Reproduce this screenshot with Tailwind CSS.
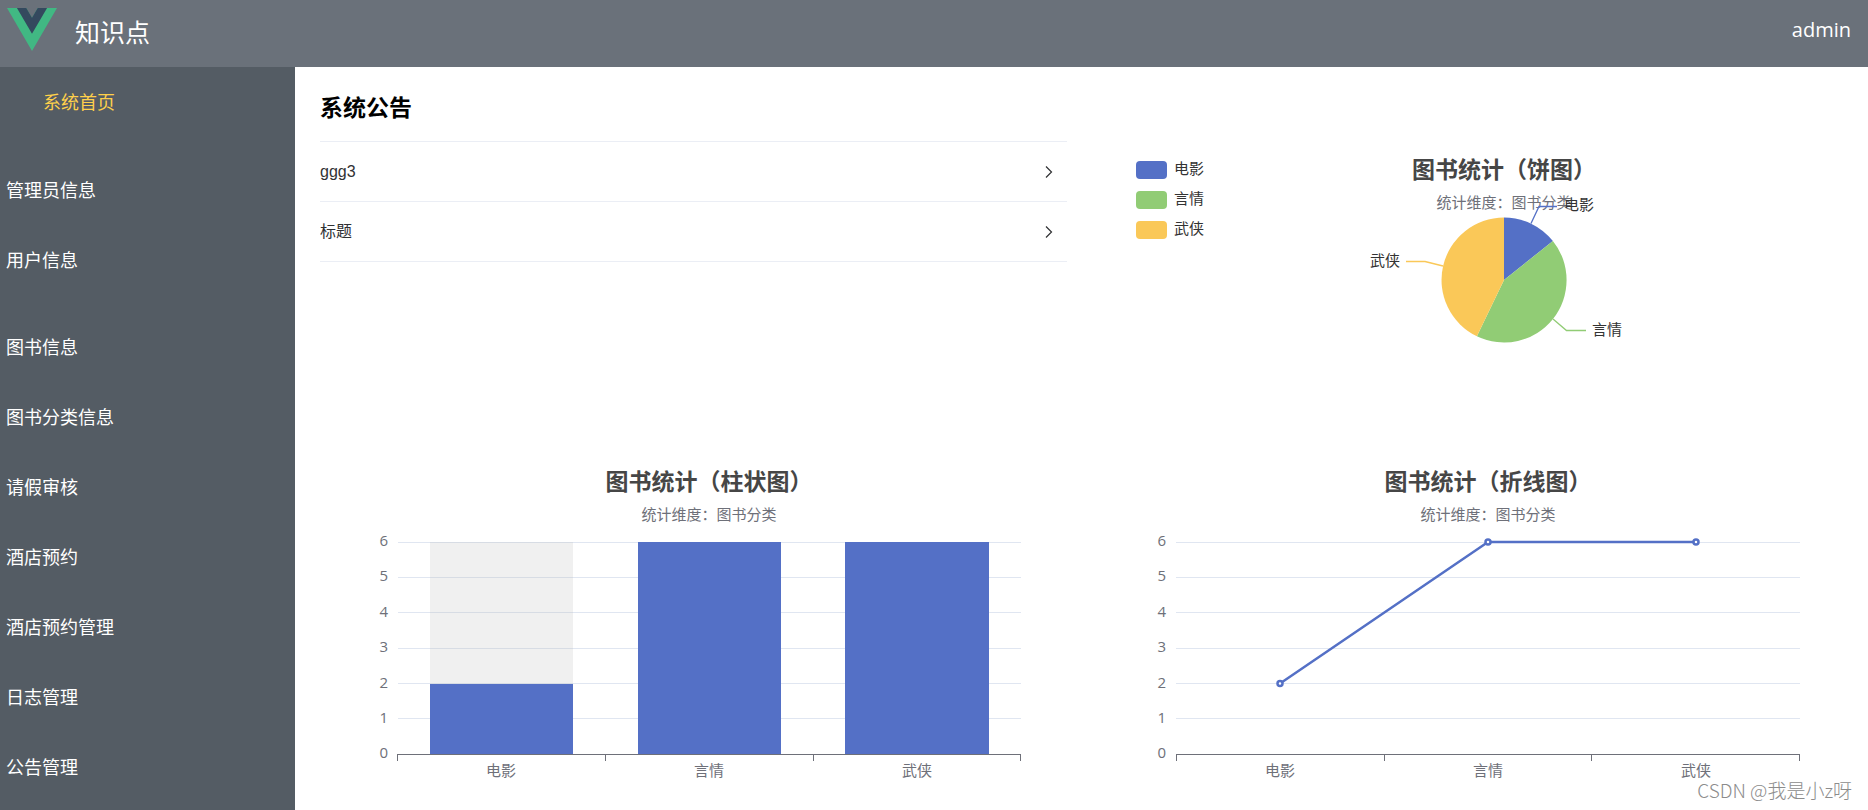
<!DOCTYPE html>
<html lang="zh-CN">
<head>
<meta charset="utf-8">
<meta name="viewport" content="width=device-width, initial-scale=1">
<title>知识点</title>
<script src="https://cdn.jsdelivr.net/npm/@tailwindcss/browser@4"></script>
</head>
<body class="min-h-screen flex flex-col bg-white overflow-x-hidden font-['Open_Sans','Noto_Sans_CJK_SC',sans-serif]">
<header class="h-[67px] shrink-0 bg-[#6a717a] flex items-center justify-between pl-[7px] pr-[17px] text-white">
  <div class="flex items-center gap-[18px] mb-2">
    <svg class="w-[50px] h-[43px]" viewBox="0 0 262 227" preserveAspectRatio="none" aria-hidden="true">
      <path fill="#41b883" d="M161 0l-30 52L101 0H0l131 227L262 0z"/>
      <path fill="#34495e" d="M161 0l-30 52L101 0H52l79 136L210 0z"/>
    </svg>
    <h1 class="text-[25px] leading-8 pt-1">知识点</h1>
  </div>
  <a href="#" class="text-xl mb-2">admin</a>
</header>
<div class="flex flex-1">
  <nav class="w-[295px] shrink-0 bg-[#545c64] text-white text-lg">
    <a href="#" class="flex items-center h-[70px] pl-[43px] text-[#ffd04b]">系统首页</a>
    <div class="mt-[18px]">
      <a href="#" class="flex items-center h-[70px] pl-[6px]">管理员信息</a>
      <a href="#" class="flex items-center h-[70px] pl-[6px]">用户信息</a>
    </div>
    <div class="mt-[17px]">
      <a href="#" class="flex items-center h-[70px] pl-[6px]">图书信息</a>
      <a href="#" class="flex items-center h-[70px] pl-[6px]">图书分类信息</a>
      <a href="#" class="flex items-center h-[70px] pl-[6px]">请假审核</a>
      <a href="#" class="flex items-center h-[70px] pl-[6px]">酒店预约</a>
      <a href="#" class="flex items-center h-[70px] pl-[6px]">酒店预约管理</a>
      <a href="#" class="flex items-center h-[70px] pl-[6px]">日志管理</a>
      <a href="#" class="flex items-center h-[70px] pl-[6px]">公告管理</a>
    </div>
  </nav>
  <main class="flex-1 min-w-0 pl-[25px]">
    <div class="grid grid-cols-2 -mr-[10px]">
      <section class="pr-8 pt-6">
        <h2 class="text-[23px] leading-8 font-bold text-black pb-[18px]">系统公告</h2>
        <div class="border-t border-[#ebeef5] text-base text-[#303133] font-['Liberation_Sans','Noto_Sans_CJK_SC',sans-serif]">
          <button type="button" class="w-full h-[60px] flex items-center justify-between pr-[14px] border-b border-[#ebeef5]">
            <span>ggg3</span>
            <svg class="w-2 h-3" viewBox="0 0 8 12" fill="none" stroke="#303133" stroke-width="1.200" aria-hidden="true"><path d="M1 0.5L6.5 6L1 11.5"/></svg>
          </button>
          <button type="button" class="w-full h-[60px] flex items-center justify-between pr-[14px] border-b border-[#ebeef5]">
            <span>标题</span>
            <svg class="w-2 h-3" viewBox="0 0 8 12" fill="none" stroke="#303133" stroke-width="1.200" aria-hidden="true"><path d="M1 0.5L6.5 6L1 11.5"/></svg>
          </button>
        </div>
      </section>

      <!-- Pie chart -->
      <svg class="w-full h-auto" viewBox="0 0 779 383" font-size="15" fill="#333" role="img" aria-label="图书统计（饼图）">
        <rect x="37" y="94" width="31" height="18" rx="4" fill="#5470c6"/>
        <rect x="37" y="124" width="31" height="18" rx="4" fill="#91cc75"/>
        <rect x="37" y="154" width="31" height="18" rx="4" fill="#fac858"/>
        <text x="75" y="107">电影</text>
        <text x="75" y="137">言情</text>
        <text x="75" y="167">武侠</text>
        <text x="405" y="111" font-size="23" font-weight="700" fill="#464646" text-anchor="middle">图书统计（饼图）</text>
        <text x="405" y="141" fill="#6e7079" text-anchor="middle">统计维度：图书分类</text>
        <path fill="#5470c6" d="M405 213V150.500A62.500 62.500 0 0 1 453.900 174z"/>
        <path fill="#91cc75" d="M405 213L453.900 174A62.500 62.500 0 0 1 377.900 269.300z"/>
        <path fill="#fac858" d="M405 213L377.900 269.300A62.500 62.500 0 0 1 405 150.500z"/>
        <g fill="none" stroke-width="1.300">
          <path stroke="#5470c6" d="M432 156.500L440 139.500H458"/>
          <path stroke="#91cc75" d="M454 252L467.500 263.500H487"/>
          <path stroke="#fac858" d="M344 199L326 194.500H307"/>
        </g>
        <text x="465" y="143">电影</text>
        <text x="493" y="268">言情</text>
        <text x="271" y="199">武侠</text>
      </svg>

      <!-- Bar chart -->
      <svg class="w-full h-auto" viewBox="0 0 779 358" font-size="15" fill="#6e7079" role="img" aria-label="图书统计（柱状图）">
        <text x="389" y="40" font-size="23" font-weight="700" fill="#464646" text-anchor="middle">图书统计（柱状图）</text>
        <text x="389" y="70" text-anchor="middle">统计维度：图书分类</text>
        <path stroke="#e0e6f1" shape-rendering="crispEdges" d="M78 92.500H701M78 127.500H701M78 162.500H701M78 198.500H701M78 233.500H701M78 268.500H701"/>
        <rect x="110" y="92" width="143" height="212" fill="#b4b4b4" fill-opacity=".2"/>
        <g fill="#5470c6">
          <rect x="110" y="234" width="143" height="70"/>
          <rect x="318" y="92" width="143" height="212"/>
          <rect x="525" y="92" width="144" height="212"/>
        </g>
        <path fill="none" stroke="#6e7079" shape-rendering="crispEdges" d="M77 304.500H701M77.500 304V310.500M285.500 304V310.500M493.500 304V310.500M700.500 304V310.500"/>
        <g text-anchor="end">
          <text x="68" y="96">6</text><text x="68" y="131">5</text><text x="68" y="167">4</text><text x="68" y="202">3</text>
          <text x="68" y="238">2</text><text x="68" y="273">1</text><text x="68" y="308">0</text>
        </g>
        <g text-anchor="middle">
          <text x="181" y="326">电影</text><text x="389" y="326">言情</text><text x="597" y="326">武侠</text>
        </g>
      </svg>

      <!-- Line chart -->
      <svg class="w-full h-auto" viewBox="0 0 779 358" font-size="15" fill="#6e7079" role="img" aria-label="图书统计（折线图）">
        <text x="389" y="40" font-size="23" font-weight="700" fill="#464646" text-anchor="middle">图书统计（折线图）</text>
        <text x="389" y="70" text-anchor="middle">统计维度：图书分类</text>
        <path stroke="#e0e6f1" shape-rendering="crispEdges" d="M77 92.500H701M77 127.500H701M77 162.500H701M77 198.500H701M77 233.500H701M77 268.500H701"/>
        <path fill="none" stroke="#6e7079" shape-rendering="crispEdges" d="M77 304.500H701M77.500 304V310.500M285.500 304V310.500M492.500 304V310.500M700.500 304V310.500"/>
        <path fill="none" stroke="#5470c6" stroke-width="2.500" stroke-linejoin="bevel" d="M181 233.500L389 92H597"/>
        <g fill="#fff" stroke="#5470c6" stroke-width="2.500">
          <circle cx="181" cy="233.500" r="2.500"/><circle cx="389" cy="92" r="2.500"/><circle cx="597" cy="92" r="2.500"/>
        </g>
        <g text-anchor="end">
          <text x="67" y="96">6</text><text x="67" y="131">5</text><text x="67" y="167">4</text><text x="67" y="202">3</text>
          <text x="67" y="238">2</text><text x="67" y="273">1</text><text x="67" y="308">0</text>
        </g>
        <g text-anchor="middle">
          <text x="181" y="326">电影</text><text x="389" y="326">言情</text><text x="597" y="326">武侠</text>
        </g>
      </svg>
    </div>
  </main>
</div>
<p class="absolute right-4 bottom-[6px] text-[19px] leading-7 font-light text-[#8c8c8c] font-['Noto_Sans_CJK_SC',sans-serif]">CSDN @我是小z呀</p>
</body>
</html>
